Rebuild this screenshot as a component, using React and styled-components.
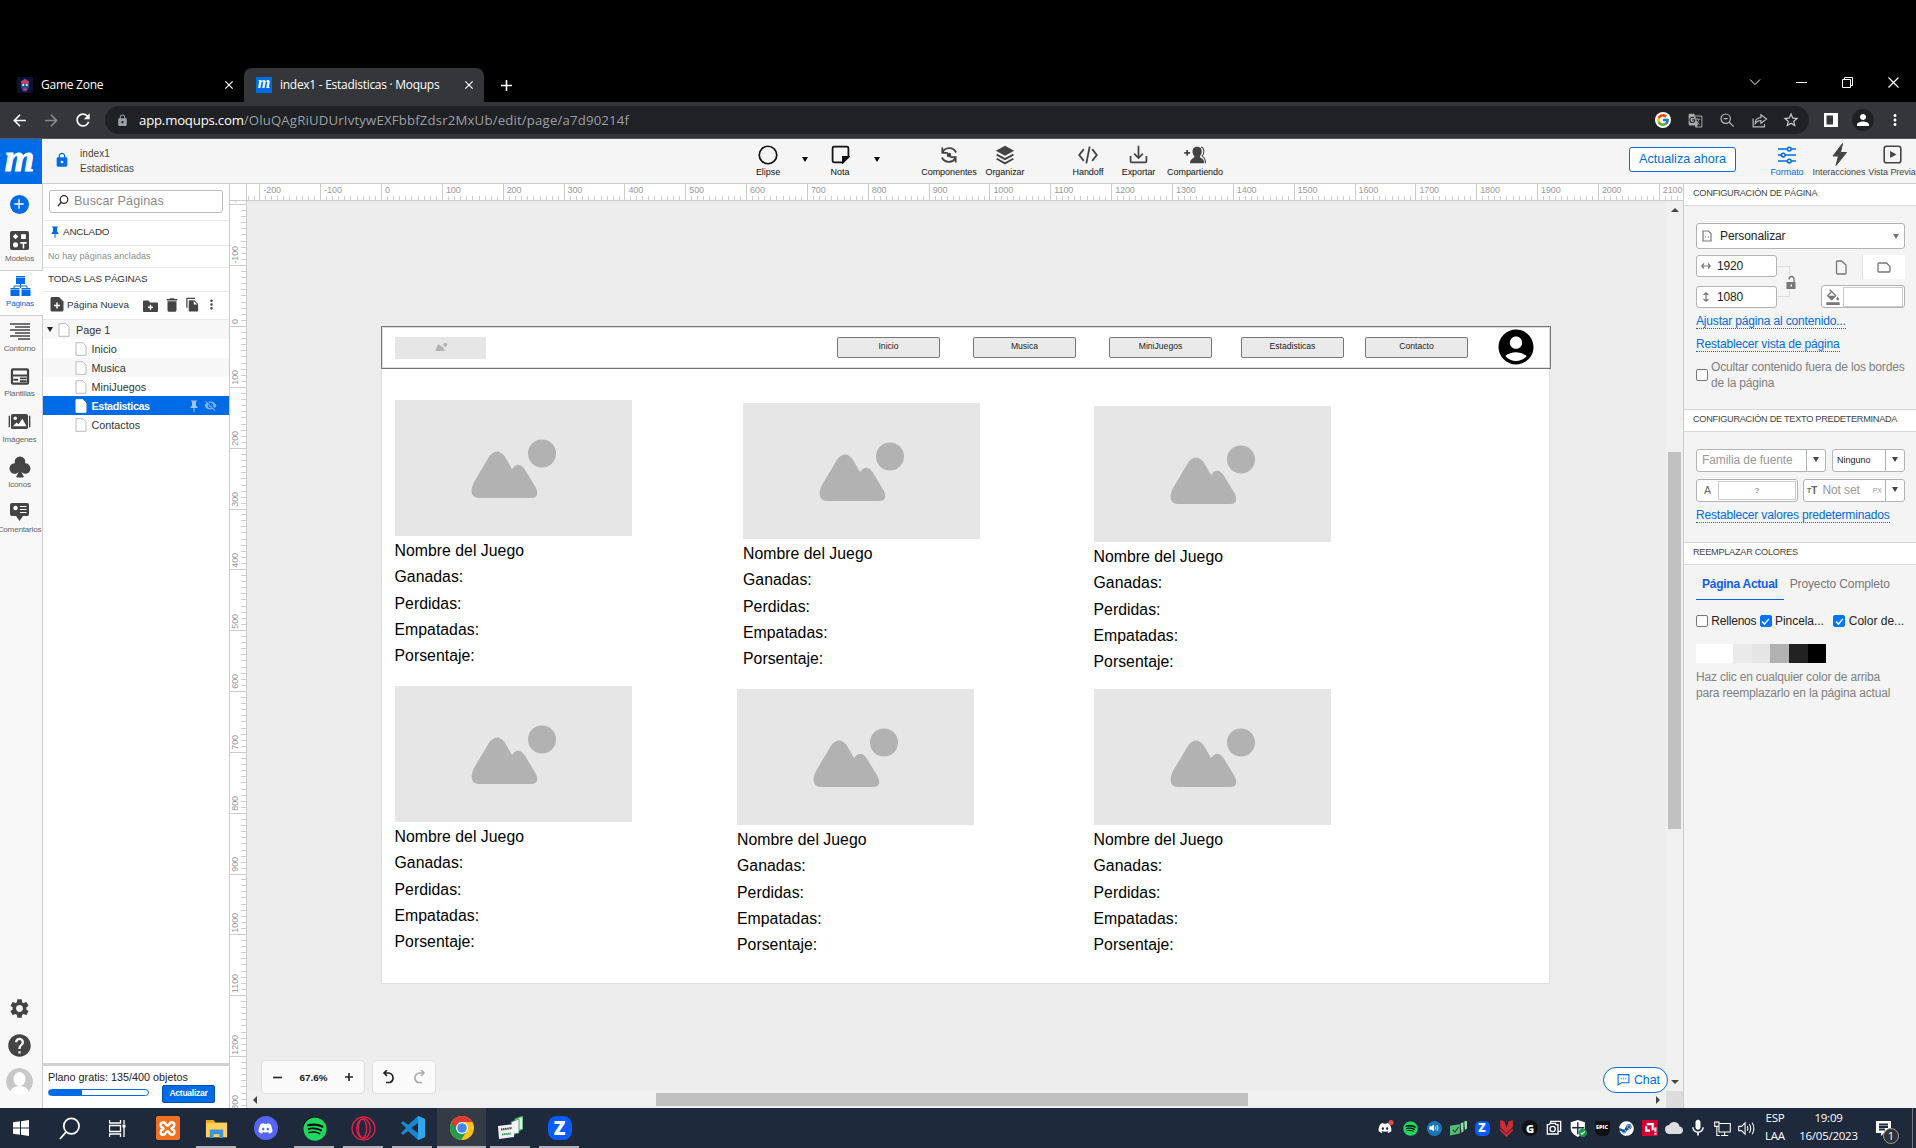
import React from 'react';
import styled, { createGlobalStyle } from 'styled-components';
import {
  MdClose, MdAdd, MdArrowBack, MdArrowForward, MdRefresh, MdLock, MdGTranslate, MdStarBorder,
  MdPerson, MdMoreVert, MdSettings, MdHelp, MdDelete, MdFileCopy,
  MdVisibilityOff, MdAccountCircle, MdFormatColorFill, MdCloud, MdMic,
} from 'react-icons/md';
import { FcGoogle } from 'react-icons/fc';
import { BsSuitClubFill } from 'react-icons/bs';
import { FaDiscord, FaSpotify, FaSteam } from 'react-icons/fa';

const Global = createGlobalStyle`
  * { box-sizing: border-box; }
  body { margin: 0; background: #000; overflow: hidden; }
  svg { display: block; flex: none; }
`;
const BLUE = '#006be6';
const INK = '#444';
const STEP = 60.845;

const Screen = styled.div`
  width: 1916px; height: 1148px; display: flex; flex-direction: column;
  font-family: "Liberation Sans", Arial, sans-serif; color: #333; white-space: nowrap; overflow: hidden;
`;
const Text = styled.span`
  font-size: ${p => p.$s || 10.8}px; color: ${p => p.$c || 'inherit'}; font-weight: ${p => p.$w || 400};
  letter-spacing: ${p => p.$ls || 0}px; margin-left: ${p => p.$ml || 0}px;
`;
const Spacer = styled.div`flex: ${p => (p.$w ? 'none' : 1)}; width: ${p => p.$w || 0}px; height: ${p => (p.$h ? `${p.$h}px` : 'auto')};`;

/* ---------- browser ---------- */
const TabStrip = styled.div`
  height: 102px; padding-top: 68px; display: flex; background: #000; color: #fff; flex: none;
  font-family: "Open Sans", "Noto Sans", sans-serif;
`;
const Tab = styled.div`
  width: ${p => p.$w}px; height: 34px; display: flex; align-items: center; padding: 0 8px 1px ${p => p.$pl}px; gap: 8px;
  background: ${p => (p.$active ? '#35363a' : 'transparent')}; border-radius: 8px 8px 0 0;
`;
const Favicon = styled.div`
  width: 16px; height: 16px; background: ${p => p.$bg}; color: #fff; display: grid; place-items: center; flex: none;
  font: italic bold 16px/8px "Liberation Serif", serif; padding-bottom: ${p => p.$pb || 0}px;
`;
const NewTab = styled.div`width: 44px; height: 34px; display: grid; place-items: center;`;
const WindowControls = styled.div`
  display: flex; height: 28px; align-items: center;
  & > div { width: 46px; display: grid; place-items: center; }
`;
const BrowserBar = styled.div`
  height: 37px; flex: none; background: #35363a; border-bottom: 1px solid #55585c; display: flex; align-items: center;
  padding-left: 3px; color: #fff;
`;
const BarButton = styled.div`width: 32px; display: grid; place-items: center; color: ${p => p.$c || '#fff'};`;
const Omnibox = styled.div`
  width: 1704px; height: 28px; border-radius: 14px; background: #202124; display: flex; align-items: center;
  margin-left: 6px; padding: 0 2px 0 11px; font-family: "Open Sans", sans-serif; color: #9aa0a6; margin-right: 6px;
`;
const ProfileDot = styled.div`
  width: 22px; height: 22px; border-radius: 50%; background: #202124; display: grid; place-items: center;
`;

/* ---------- app header ---------- */
const Header = styled.div`
  height: 45px; flex: none; display: flex; background: #f5f5f5; border-bottom: 1px solid #ccc; position: relative;
`;
const Logo = styled.div`
  width: 42px; height: 45px; flex: none; background: ${BLUE}; color: #fff; display: grid; place-items: center;
  font: italic bold 38px/30px "Liberation Serif", serif; padding: 0 3px 8px 0; -webkit-text-stroke: 0.8px #fff;
`;
const DocNames = styled.div`
  width: 663px; margin-left: 11px; display: flex; flex-direction: column; padding-top: 7px; line-height: 15px; font-size: 10px; color: #444; letter-spacing: 0.07px;
`;
const HeaderLock = styled.div`width: 27px; padding: 13px 0 0 12px; color: ${BLUE};`;
const Tool = styled.div`
  width: ${p => p.$w}px; margin-left: ${p => p.$ml || 0}px; display: flex; flex-direction: column; align-items: center; flex: none;
  color: ${p => p.$c || '#444'}; padding-top: 5px;
  & > div { height: 23px; margin-top: -1px; display: grid; place-items: center; }
  & > span { font-size: 9px; line-height: 13px; color: ${p => p.$tc || '#111'}; letter-spacing: -0.05px; }
`;
const ToolCaret = styled.div`
  width: ${p => p.$w}px; padding: 18px 0 0; display: flex; justify-content: center;
`;
const Triangle = styled.i`
  width: 0; height: 0; border: ${p => p.$s || 4}px solid transparent; flex: none;
  ${p => (p.$h ? `border-top-width:${p.$h}px;` : '')}
  ${p => (p.$d === 'up' ? `border-bottom-color:${p.$c || INK};border-top:0;` : '')}
  ${p => (p.$d === 'down' ? `border-top-color:${p.$c || INK};border-bottom:0;` : '')}
  ${p => (p.$d === 'left' ? `border-right-color:${p.$c || INK};border-left:0;` : '')}
  ${p => (p.$d === 'right' ? `border-left-color:${p.$c || INK};border-right:0;` : '')}
`;
const UpgradeButton = styled.div`
  width: 107px; height: 25px; margin: 8px 28px 0 0; border: 1px solid ${BLUE}; border-radius: 3px; background: #fff; color: ${BLUE};
  font-size: 12.6px; line-height: 22px; text-align: center;
`;

/* ---------- workspace ---------- */
const Workspace = styled.div`height: 924px; display: flex; flex: none;`;
const Rail = styled.div`
  width: 43px; flex: none; background: #f8f8f8; border-right: 1px solid #ccc; display: flex; flex-direction: column;
`;
const AddSlot = styled.div`height: 41px; padding: 10.500px 0 0 9.500px;`;
const AddButton = styled.div`
  width: 19px; height: 19px; border-radius: 50%; background: ${BLUE}; color: #fff; display: grid; place-items: center;
`;
const RailItem = styled.div`
  height: 45.3px; width: ${p => (p.$active ? 43 : 42)}px; padding-right: 3px; display: flex; flex-direction: column; align-items: center;
  background: ${p => (p.$active ? '#fff' : 'transparent')}; color: ${p => (p.$active ? BLUE : INK)};
  box-shadow: ${p => (p.$active ? 'inset 0 1px #ccc, inset 0 -1px #ccc' : 'none')};
  & > div { height: 24px; margin-top: ${p => (p.$active ? 3.5 : 3.5)}px; display: grid; place-items: center; }
  & > span { font-size: 8.1px; line-height: 11px; letter-spacing: -0.2px; color: ${p => (p.$active ? BLUE : '#666')}; }
`;
const RailFoot = styled.div`height: 36.5px; width: 39px; display: grid; place-items: center; color: ${INK};`;
const Avatar = styled.div`width: 27px; height: 27px; border-radius: 50%; overflow: hidden;`;

const Pages = styled.div`width: 186px; flex: none; background: #fff; display: flex; flex-direction: column;`;
const SearchWrap = styled.div`height: 37px; border-bottom: 1px solid #e6e6e6; padding: 6px 6px 0;`;
const SearchBox = styled.div`
  height: 23px; border: 1px solid #bbb; border-radius: 3px; display: flex; align-items: center; padding: 0 0 1px 7px; gap: 5px; color: #8a8a8a;
`;
const Line = styled.div`
  height: ${p => p.$h}px; border-bottom: 1px solid #e6e6e6; display: flex; align-items: center; padding: 0 0 ${p => p.$pb || 2}px ${p => p.$pl || 5}px; flex: none;
`;
const PageRow = styled.div`
  height: 19px; flex: none; display: flex; align-items: center; padding: 0 12px 0 ${p => (p.$root ? 4 : 32)}px; gap: ${p => (p.$root ? 5 : 4.5)}px;
  background: ${p => (p.$active ? BLUE : p.$alt ? '#f7f7f7' : '#fff')}; color: ${p => (p.$active ? '#fff' : '#333')};
  font-size: 10.8px; font-weight: ${p => (p.$active ? 700 : 400)}; letter-spacing: ${p => (p.$active ? -0.4 : 0)}px;
`;
const Plan = styled.div`
  height: 45px; border-top: 3px solid #d0d0d0; padding: 4px 0 0 5px; color: #222; font-size: 10.8px; line-height: 14px;
`;
const PlanRow = styled.div`display: flex; align-items: flex-start;`;
const Progress = styled.div`
  width: 101px; height: 7px; margin-top: 5px; border: 1px solid ${BLUE}; border-radius: 4px; background: linear-gradient(90deg, ${BLUE} 33%, #fff 33%);
`;
const SmallButton = styled.div`
  width: 53px; height: 18px; margin: 1px 0 0 13px; background: ${BLUE}; border: 1px solid #004fae; border-radius: 2px; color: #fff; font-size: 8.6px;
  font-weight: 700; line-height: 15px; text-align: center; letter-spacing: -0.3px;
`;

const VRulerColumn = styled.div`width: 18px; flex: none; background: #fff; border: 1px solid #ccc; border-width: 0 1px; display: flex; flex-direction: column;`;
const RulerCorner = styled.div`height: 17px; border-bottom: 1px solid #ccc; flex: none;`;
const VRuler = styled.div`flex: 1; overflow: hidden; min-height: 0;`;
const VCell = styled.div`
  height: ${STEP}px; margin-top: ${p => p.$first || 0}px; border-bottom: 1px solid #ccc; display: flex; align-items: flex-end; padding-bottom: 2px;
  background: repeating-linear-gradient(0deg, transparent 0 5.08px, #ccc 5.08px 6.0845px) right bottom / 5px 100% no-repeat;
  & > span { writing-mode: vertical-rl; transform: rotate(180deg); font-size: 9px; line-height: 11px; color: #999; letter-spacing: -0.1px; }
`;
const Center = styled.div`width: 1436px; flex: none; display: flex; flex-direction: column;`;
const HRuler = styled.div`height: 17px; flex: none; background: #fff; border-bottom: 1px solid #ccc; display: flex; overflow: hidden;`;
const HCell = styled.div`
  width: ${STEP}px; flex: none; margin-left: ${p => p.$first || 0}px; border-left: 1px solid #ccc; padding-left: 3px; font-size: 9px; line-height: 12px; color: #999; letter-spacing: -0.1px;
  background: repeating-linear-gradient(90deg, transparent 0 5.08px, #ccc 5.08px 6.0845px) left bottom / 100% 4px no-repeat;
`;
const CanvasGrid = styled.div`flex: 1; display: grid; grid-template: 1fr 17px / 1fr 17px; position: relative;`;
const Canvas = styled.div`background: #ededed; position: relative; overflow: hidden;`;
const VScroll = styled.div`background: #f0f0f0; display: flex; flex-direction: column; align-items: center; padding: 7px 0;`;
const VThumb = styled.div`width: 13px; height: 377px; background: #c1c1c1; margin-top: 240px;`;
const HScroll = styled.div`background: #f0f0f0; display: flex; align-items: center; padding: 0 6px;`;
const HThumb = styled.div`width: 592px; height: 13px; background: #c1c1c1; margin-left: 399px;`;
const ScrollCorner = styled.div`background: #dcdcdc;`;

const Artboard = styled.div`
  position: absolute; left: 134px; top: 125px; width: 1169px; height: 658px; background: #fff; border: 1px solid #ddd;
`;
const MockNav = styled.div`
  position: absolute; left: -1px; top: -1px; width: 1170px; height: 43px; border: 1px solid #777; box-shadow: inset 0 0 0 1px #ddd;
`;
const Placed = styled.div`position: absolute; left: ${p => p.$x}px; top: ${p => p.$y}px;`;
const MockButton = styled(Placed)`
  width: 103px; height: 21px; border: 1px solid #777; border-radius: 2px; background: #eaeaea; color: #222; font-size: 8.6px; line-height: 17px; text-align: center;
`;
const GameCard = styled(Placed)`
  width: 237px; color: #000; font-size: 15.8px; line-height: 26.4px; display: flex; flex-direction: column; letter-spacing: 0.03px;
`;
const FloatBox = styled.div`
  height: 34px; background: #fafafa; border: 1px solid #ddd; border-radius: 4px; display: flex; align-items: center; justify-content: space-between; padding: 0 ${p => p.$p}px; width: ${p => p.$w}px; color: #222;
`;
const FloatBar = styled.div`position: absolute; left: 14px; top: 859px; display: flex; gap: 7px;`;
const Chat = styled.div`
  position: absolute; left: 1356px; top: 866px; width: 65px; height: 26px; border: 1px solid ${BLUE}; border-radius: 13px; background: #fff; color: ${BLUE};
  display: flex; align-items: center; padding: 0 0 1px 13px; gap: 4px; font-size: 12.4px; letter-spacing: -0.1px;
`;

/* ---------- format panel ---------- */
const Format = styled.div`width: 233px; flex: none; border-left: 1px solid #ccc; background: #f4f4f4; display: flex; flex-direction: column; color: #222;`;
const SectionHead = styled.div`
  height: ${p => p.$h || 22}px; flex: none; background: #fff; border: 1px solid #d8d8d8; border-width: ${p => (p.$first ? 0 : 1)}px 0 1px; padding: 0 0 3px 9px; display: flex; align-items: center;
  font-size: 9.2px; letter-spacing: -0.28px; color: #444;
`;
const SectionBody = styled.div`height: ${p => p.$h}px; padding: ${p => p.$pt}px 11px 0 12px; display: flex; flex-direction: column; align-items: flex-start;`;
const Row = styled.div`display: flex; align-items: ${p => p.$a || 'center'}; margin-top: ${p => p.$mt || 0}px; width: 209px; gap: ${p => p.$g || 0}px;`;
const Field = styled.div`
  width: ${p => p.$w}px; height: ${p => p.$h || 23}px; background: #fff; border: 1px solid #b3b3b3; border-radius: 3px; display: flex; align-items: center;
  padding: 0 ${p => p.$pr || 0}px 0 ${p => p.$pl || 0}px; color: ${p => p.$c || '#222'}; font-size: ${p => p.$s || 12}px; flex: none;
`;
const DropCell = styled.div`width: 19px; align-self: stretch; border-left: 1px solid #b3b3b3; display: flex; justify-content: center; padding-top: 7px;`;
const SizeStack = styled.div`display: flex; flex-direction: column; gap: 9px;`;
const LinkLines = styled.div`width: 31px; height: 52px; flex: none; color: #777;`;
const Orientation = styled.div`display: flex; margin-left: 24px; & > div { width: 43px; height: 24px; display: grid; place-items: center; }`;
const ActiveSide = styled.div`background: #fff; border-left: 1px solid #ddd;`;
const SideControls = styled.div`display: flex; flex-direction: column; gap: 6px; width: 97px; align-items: flex-end;`;
const Swatch = styled.div`
  width: ${p => p.$w}px; height: ${p => p.$h}px; background: #fff; border: 1px solid #ccc; text-align: center; font-size: 8px; font-weight: 700; line-height: 17px; color: #999;
`;
const PanelLink = styled.div`
  color: ${BLUE}; font-size: 12px; line-height: 13px; border-bottom: 1px dotted ${BLUE}; margin-top: ${p => p.$mt}px; letter-spacing: -0.17px;
`;
const Box = styled.div`
  width: 12px; height: 12px; border: 1px solid ${p => (p.$on ? '#0075ff' : '#767676')}; border-radius: 2px; background: ${p => (p.$on ? '#0075ff' : '#fff')}; flex: none; display: grid; place-items: center;
`;
const Wrap = styled.div`font-size: 12px; line-height: 16px; color: #808080; letter-spacing: -0.18px; margin-top: ${p => p.$mt || 0}px;`;
const TabLabel = styled.div`
  height: 31px; padding: 8px 6px 0; font-size: 12px; font-weight: ${p => (p.$active ? 700 : 400)}; color: ${p => (p.$active ? '#0f5cf0' : '#777')};
  border-bottom: 1px solid ${p => (p.$active ? '#0f5cf0' : 'transparent')}; letter-spacing: ${p => (p.$active ? -0.25 : -0.12)}px;
`;
const ColorStrip = styled.div`display: flex; margin-top: 16px; height: 19px;`;
const Color = styled.div`width: ${p => p.$w}px; background: ${p => p.$c};`;

/* ---------- taskbar ---------- */
const Taskbar = styled.div`
  height: 40px; flex: none; background: #1e2a3c; display: flex; color: #fff; font-family: "Open Sans", sans-serif; overflow: hidden;
`;
const Slot = styled.div`
  width: ${p => p.$w || 49}px; display: grid; place-items: center; position: relative; flex: none;
  background: ${p => (p.$active ? '#343b44' : 'transparent')};
  &::after { content: ''; position: absolute; bottom: 0; left: ${p => (p.$active ? 0 : 4)}px; right: ${p => (p.$active ? 0 : 5)}px; height: 2px; background: ${p => (p.$open || p.$active ? '#b4b3b6' : 'transparent')}; }
`;
const TraySlot = styled.div`width: 24px; display: grid; place-items: center;`;
const TwoLines = styled.div`width: ${p => p.$w}px; font-size: 11.5px; line-height: 17.5px; text-align: center; padding-top: 1px; letter-spacing: -0.25px;`;
const Notice = styled.div`width: 47px; display: flex; align-items: center; padding-left: 11px; position: relative;`;
const Badge = styled.div`
  position: absolute; left: 18px; top: 20px; width: 16px; height: 16px; border-radius: 50%; background: #333; border: 1px solid #999; font-size: 11px; line-height: 14px; text-align: center;
`;
const ShowDesktop = styled.div`width: 4px; border-left: 1px solid #777;`;
const Disc = styled.div`
  width: ${p => p.$s}px; height: ${p => p.$s}px; border-radius: ${p => p.$r || '50%'}; background: ${p => p.$bg}; color: ${p => p.$c || '#fff'}; display: grid; place-items: center;
  font: 800 ${p => p.$f || 12}px/1 "Open Sans", sans-serif;
`;
const ImageBlock = styled.div`
  width: ${p => p.$w}px; height: ${p => p.$h}px; background: #e6e6e6; display: grid; place-items: center; overflow: hidden; flex: none; margin-bottom: 1.8px;
`;

const Ico = ({ s = 20, h, vb = '0 0 24 24', children, w = 2, fill = 'none' }) => (
  <svg width={s} height={h || s} viewBox={vb} fill={fill} stroke={fill === 'none' ? 'currentColor' : 'none'} strokeWidth={w}>{children}</svg>
);
const PageIcon = ({ on }) => (
  <svg width="12" height="14" viewBox="0 0 12 14"><path d="M1 .7h7L11 4v9.3H1z" fill="#fff" stroke={on ? '#fff' : '#bbb'} /></svg>
);
const Scene = ({ w, h, vb = '0 0 237 136' }) => (
  <svg width={w} height={h} viewBox={vb} preserveAspectRatio="xMidYMid meet">
    <path fill="#b2b2b2" d="M84 98Q76.500 98 76.500 90Q77 86 79 82L94.500 56Q102 47 109.500 56L117 69Q123 60.500 129.500 69L141 88Q145 98 136 98Z" />
    <circle cx="147" cy="53.500" r="14" fill="#b2b2b2" />
  </svg>
);
const Zoomer = ({ s, f }) => <Disc $s={s} $bg="#0b5cff" $r="36%" $f={f}>Z</Disc>;
const DeskStack = () => (
  <Ico s={25} h={24} vb="0 0 25 24" fill="#fff">
    <path d="M17 3l8-3v13l-5 2z" fill="#dff0e4" stroke="#2f9a55" strokeWidth="1.200" />
    <path d="M13 6l8-3v14l-5 1z" fill="#f2f7f3" stroke="#2f9a55" strokeWidth=".8" />
    <path d="M0 10l17-2-1 13-15 2z" fill="#f1f1f1" />
    <path d="M3 13.500l11-1.500" stroke="#444" strokeWidth="2" strokeDasharray="1.500 .6" /><path d="M4 18.500l9-1" stroke="#2f9a55" strokeWidth="2" strokeDasharray="1.500 .6" />
  </Ico>
);

const tree = [['Inicio'], ['Musica', 1], ['MiniJuegos'], ['Estadisticas', 0, 1], ['Contactos']];
const cards = [[12.5, 73], [361, 76], [711.5, 79], [12.5, 359], [355, 362], [711.5, 362]];
const navs = [['Inicio', 455], ['Musica', 591], ['MiniJuegos', 727], ['Estadisticas', 859], ['Contacto', 983]];
const hMarks = Array.from({ length: 25 }, (_, i) => (i - 3) * 100);
const vMarks = Array.from({ length: 16 }, (_, i) => (i - 2) * 100);

export default function App() {
  return (
    <Screen>
      <Global />
      <TabStrip>
        <Tab $w={244} $pl={17}>
          <Favicon $bg="#0d1030">
            <Ico s={14} fill="#c44a70"><path d="M12 1l7 5v9l-4 8H9l-4-8V6z" fill="#35488e" /><path d="M5 6l7-4 7 4-2 4H7z" fill="#c83c60" /><circle cx="9" cy="12" r="2" fill="#8fd" /><circle cx="15" cy="12" r="2" fill="#8fd" /><path d="M9 18h6v3H9z" /></Ico>
          </Favicon>
          <Text $s={12} $ls={-0.25}>Game Zone</Text><Spacer /><MdClose size={14} />
        </Tab>
        <Tab $w={240} $pl={12} $active>
          <Favicon $bg={BLUE} $pb={3}>m</Favicon>
          <Text $s={12} $ls={-0.28}>index1 - Estadisticas · Moqups</Text><Spacer /><MdClose size={14} />
        </Tab>
        <NewTab><MdAdd size={19} /></NewTab>
        <Spacer />
        <WindowControls>
          <div><Ico s={12} vb="0 0 12 12" w={1}><path d="M1 3.500l5 5 5-5" /></Ico></div>
          <div><Ico s={11} vb="0 0 11 11" w={1}><path d="M0 5.500h11" /></Ico></div>
          <div><Ico s={11} vb="0 0 11 11" w={1}><path d="M.5 2.500h8v8h-8zM2.500 2.500v-2h8v8h-2" /></Ico></div>
          <div><Ico s={11} vb="0 0 11 11" w={1.2}><path d="M.5.5l10 10M10.500.5l-10 10" /></Ico></div>
        </WindowControls>
      </TabStrip>
      <BrowserBar>
        <BarButton><MdArrowBack size={19} /></BarButton>
        <BarButton $c="#8a8b8e"><MdArrowForward size={19} /></BarButton>
        <BarButton><MdRefresh size={20} /></BarButton>
        <Omnibox>
          <MdLock size={13} />
          <Text $s={13.2} $c="#fff" $ml={10} $ls={-0.2}>app.moqups.com</Text><Text $s={13.2} $ls={0.17}>/OluQAgRiUDUrIvtywEXFbbfZdsr2MxUb/edit/page/a7d90214f</Text>
          <Spacer />
          <BarButton><Disc $s={16} $bg="#fff"><FcGoogle size={14} /></Disc></BarButton>
          <BarButton $c="#aaa"><MdGTranslate size={15} /></BarButton>
          <BarButton $c="#bbb"><Ico s={16} w={1.8}><circle cx="10" cy="10" r="7" /><path d="M15 15l7 7M7 10h6" /></Ico></BarButton>
          <BarButton $c="#bbb"><Ico s={17} w={1.7}><path d="M3 9v12h16v-4M14 4l8 6-8 6v-4c-4 0-6 1-8 4 0-5 3-8 8-8z" /></Ico></BarButton>
          <BarButton $c="#ccc"><MdStarBorder size={18} /></BarButton>
        </Omnibox>
        <BarButton><Ico s={14} vb="0 0 14 14" fill="#fff"><path fillRule="evenodd" d="M0 0h14v14H0zM2.500 2.500v9H9v-9z" /></Ico></BarButton>
        <BarButton><ProfileDot><MdPerson size={18} /></ProfileDot></BarButton>
        <BarButton><MdMoreVert size={18} /></BarButton>
      </BrowserBar>

      <Header>
        <Logo>m</Logo>
        <HeaderLock><MdLock size={16} /></HeaderLock>
        <DocNames><span>index1</span><span>Estadisticas</span></DocNames>
        <Tool $w={50} $c="#111"><div><Ico s={20} w={2}><circle cx="12" cy="12" r="10.500" /></Ico></div><span>Elipse</span></Tool>
        <ToolCaret $w={23}><Triangle $d="down" $c="#000" $s={3.5} $h={5} /></ToolCaret>
        <Tool $w={48} $c="#111"><div><Ico s={19} w={2.2}><path d="M2 4q0-2 2-2h16q2 0 2 2v11l-7 7H4q-2 0-2-2z" /><path d="M22 15h-7v7z" fill="currentColor" /></Ico></div><span>Nota</span></Tool>
        <ToolCaret $w={26}><Triangle $d="down" $c="#000" $s={3.5} $h={5} /></ToolCaret>
        <Tool $w={62} $ml={28}><div><Ico s={20} w={2.2}><path d="M4 9.500A9 9 0 0 1 20.500 9M4 3v6.500h6.500M20 14.500A9 9 0 0 1 3.500 15M20 21v-6.500h-6.500" /><circle cx="12" cy="12" r="2.800" fill="currentColor" stroke="none" /></Ico></div><span>Componentes</span></Tool>
        <Tool $w={50}><div><Ico s={20} w={2.2}><path d="M12 1l11 6-11 6L1 7z" fill="currentColor" stroke="none" /><path d="M2 11.500l10 5.500 10-5.500M2 16.500L12 22l10-5.500" /></Ico></div><span>Organizar</span></Tool>
        <Tool $w={42} $ml={37}><div><Ico s={20} w={2.2}><path d="M7 5l-5.500 7L7 19M17 5l5.500 7L17 19M14 2l-4 20" /></Ico></div><span>Handoff</span></Tool>
        <Tool $w={59}><div><Ico s={19} w={2.2}><path d="M12 1v15M6.500 11l5.500 5.500 5.500-5.500M2 14v6.500q0 1.500 1.500 1.500h17q1.500 0 1.500-1.500V14" /></Ico></div><span>Exportar</span></Tool>
        <Tool $w={54}><div><Ico s={23} vb="0 0 27 24" h={20} w={2}><path d="M0 9.500h7M3.500 6v7" /><path d="M15.500 2c4.500 0 5.500 3 5.500 6s-1.500 4-2 5v2c1.500 1 5 1.500 5 7H7c0-5.500 4-6 5-7v-2c-1-1-2-2-2-5s1-6 5.500-6z" fill="currentColor" stroke="none" /><path d="M20 2.500c2.500.5 3.500 3 3.500 5.500 0 2-1 4-2 5 3 2 4 4 4 9" strokeWidth="1.300" /></Ico></div><span>Compartiendo</span></Tool>
        <Spacer />
        <UpgradeButton>Actualiza ahora</UpgradeButton>
        <Tool $w={46} $c={BLUE} $tc={BLUE}><div><Ico s={18} w={2}><path d="M0 4h12M18 4h6M0 12h4M10 12h14M0 20h12M18 20h6" /><circle cx="15" cy="4" r="2.500" /><circle cx="7" cy="12" r="2.500" /><circle cx="15" cy="20" r="2.500" /></Ico></div><span>Formato</span></Tool>
        <Tool $w={58} $tc="#444"><div><Ico s={17} h={23} vb="0 0 17 22" fill="#444"><path d="M11.500 0L2 12.500h5.500L5 22 15.500 9H9.500z" stroke="#444" strokeWidth="1" /></Ico></div><span>Interacciones</span></Tool>
        <Tool $w={48} $tc="#444"><div><Ico s={19} w={2}><rect x="1.500" y="1.500" width="21" height="21" rx="3" /><path d="M9 7.500l8 4.500-8 4.500z" fill="currentColor" stroke="none" /></Ico></div><span>Vista Previa</span></Tool>
      </Header>

      <Workspace>
        <Rail>
          <AddSlot><AddButton><MdAdd size={16} /></AddButton></AddSlot>
          <RailItem><div><Ico s={19} fill="#444"><rect width="24" height="24" rx="2.500" /><path d="M7 3.500l3.500 3.500L7 10.500 3.500 7zM14 4h6v6h-6zM13 14h8v2h-3v6h-2v-6h-3z" fill="#fff" /><circle cx="7" cy="17.500" r="3.200" fill="#fff" /></Ico></div><span>Modelos</span></RailItem>
          <RailItem $active><div><Ico s={21} h={22} vb="0 0 21 22" w={1}><path d="M10.500 8v5M4 14v-3h13v3" /><path fill="currentColor" stroke="none" d="M6 1h9v1.500H6zM6 3h9v6H6zM.5 13h9v1.500h-9zM.5 15h9v6H.5zM11.500 13h9v1.500h-9zM11.500 15h9v6h-9z" /></Ico></div><span>Páginas</span></RailItem>
          <RailItem><div><Ico s={20} h={17} vb="0 0 20 17" w={1.6}><path d="M0 1h20M5 4h15M0 7h20M5 10h15M0 13h20M8 16h12" /></Ico></div><span>Contorno</span></RailItem>
          <RailItem><div><Ico s={20} h={17} vb="0 0 20 18" w={2.4}><rect x="1.500" y="1.500" width="17" height="15" rx="1" /><path d="M1 8h18M3 12.500h5M10 11h7M10 14h7" strokeWidth="2" /></Ico></div><span>Plantillas</span></RailItem>
          <RailItem><div><Ico s={23} h={17} vb="0 0 23 18" fill="#444"><rect x="2.500" y="1" width="18" height="16" rx="2" /><path d="M0 3h1.500v12H0zM21.500 3H23v12h-1.500z" /><circle cx="7" cy="5.500" r="1.800" fill="#fff" /><path d="M4.500 14l4-4 2 2 4-6 4.500 8z" fill="#fff" /></Ico></div><span>Imágenes</span></RailItem>
          <RailItem><div><BsSuitClubFill size={24} /></div><span>Iconos</span></RailItem>
          <RailItem><div><Ico s={19} h={18} vb="0 0 19 18" fill="#444"><path d="M2 0h15q2 0 2 2v9q0 2-2 2h-4l-3.500 5L6 13H2q-2 0-2-2V2q0-2 2-2z" /><circle cx="5.500" cy="5" r="2.200" fill="#fff" /><path d="M10 3.500h6.500M10 6.500h6.500M10 9.500h6.500" stroke="#fff" strokeWidth="1.200" /></Ico></div><span>Comentarios</span></RailItem>
          <Spacer />
          <RailFoot><MdSettings size={23} /></RailFoot>
          <RailFoot><MdHelp size={27} /></RailFoot>
          <RailFoot><Avatar><Ico s={27} vb="0 0 27 27" fill="#c8c8c8"><circle cx="13.500" cy="13.500" r="13.500" /><ellipse cx="13.500" cy="11" rx="6" ry="7" fill="#fff" /><ellipse cx="13.500" cy="24" rx="9" ry="6" fill="#fff" /></Ico></Avatar></RailFoot>
          <Spacer $w={1} $h={8} />
        </Rail>

        <Pages>
          <SearchWrap><SearchBox><Ico s={12} vb="0 0 12 12" w={1.3}><g stroke="#333"><circle cx="7" cy="4.500" r="3.800" /><path d="M4.500 7L1 11" /></g></Ico><Text $s={12.6} $ls={0.12}>Buscar Páginas</Text></SearchBox></SearchWrap>
          <Line $h={25} $pl={6} $pb={3}><Ico s={12} fill={BLUE}><path d="M6 1h12v2h-2v8l3 3v2h-6v7l-1 1-1-1v-7H5v-2l3-3V3H6z" /></Ico><Text $s={9.9} $ml={2} $ls={-0.2}>ANCLADO</Text></Line>
          <Line $h={22}><Text $s={9} $c="#8c8c8c" $ls={0.07}>No hay páginas ancladas</Text></Line>
          <Line $h={24}><Text $s={9.9} $ls={-0.15}>TODAS LAS PÁGINAS</Text></Line>
          <Line $h={28} $pl={7}>
            <Ico s={14} h={15} vb="0 0 14 15" fill="#444"><path d="M2 0h7l4.500 4.500V13q0 1.500-1.500 1.500H2Q.5 14.500.5 13V1.500Q.5 0 2 0z" /><path d="M7 5.500v6M4 8.500h6" stroke="#fff" strokeWidth="1.500" /></Ico>
            <Text $s={9.9} $ml={3} $ls={0}>Página Nueva</Text><Spacer $w={14} />
            <Ico s={15} h={15} vb="0 -3 15 15" fill="#444"><path d="M0 1.500Q0 .5 1 .5h4.500L7 2.500h7q1 0 1 1V11q0 1-1 1H1q-1 0-1-1z" /><path d="M7.500 4.800v5M5 7.300h5" stroke="#fff" strokeWidth="1.400" /></Ico>
            <Spacer $w={5} /><MdDelete size={18} color="#444" /><Spacer $w={4} /><MdFileCopy size={15} color="#444" /><Spacer $w={4} /><MdMoreVert size={15} color="#444" />
          </Line>
          <PageRow $root $alt><Triangle $d="down" $s={3} $h={5} $c="#222" /><PageIcon /><Text $ml={1}>Page 1</Text></PageRow>
          {tree.map(([n, alt, on]) => (
            <PageRow key={n} $alt={alt} $active={on}><PageIcon on={on} /><span>{n}</span>
              {on ? <><Spacer /><Ico s={12} fill="#9cc4f5"><path d="M6 1h12v2h-2v8l3 3v2h-6v7l-1 1-1-1v-7H5v-2l3-3V3H6z" /></Ico><MdVisibilityOff size={13} color="#7fb3f2" /></> : null}
            </PageRow>
          ))}
          <Spacer />
          <Plan>Plano gratis: 135/400 objetos<PlanRow><Progress /><SmallButton>Actualizar</SmallButton></PlanRow></Plan>
        </Pages>

        <VRulerColumn>
          <RulerCorner />
          <VRuler>{vMarks.map((m, i) => <VCell key={m} $first={i === 0 ? -56.5 : 0}><span>{m}</span></VCell>)}</VRuler>
        </VRulerColumn>

        <Center>
          <HRuler>{hMarks.map((m, i) => <HCell key={m} $first={i === 0 ? -48.5 : 0}>{m}</HCell>)}</HRuler>
          <CanvasGrid>
            <Canvas>
              <Artboard>
                <MockNav />
                <Placed $x={12.5} $y={9.5}><ImageBlock $w={91} $h={22}><Scene w={91} h={22} vb="5 -3 215 160" /></ImageBlock></Placed>
                {navs.map(([n, x]) => <MockButton key={n} $x={x} $y={10}>{n}</MockButton>)}
                <Placed $x={1113} $y={-1}><MdAccountCircle size={42} color="#000" /></Placed>
                {cards.map(([x, y]) => (
                  <GameCard key={`${x}-${y}`} $x={x} $y={y}>
                    <ImageBlock $w={237} $h={136}><Scene w={237} h={136} /></ImageBlock>
                    <span>Nombre del Juego</span><span>Ganadas:</span><span>Perdidas:</span><span>Empatadas:</span><span>Porsentaje:</span>
                  </GameCard>
                ))}
              </Artboard>
            </Canvas>
            <VScroll><Triangle $d="up" $s={4} /><VThumb /><Spacer /><Triangle $d="down" $s={4} /></VScroll>
            <HScroll><Triangle $d="left" $s={4} /><HThumb /><Spacer /><Triangle $d="right" $s={4} /></HScroll>
            <ScrollCorner />
            <FloatBar>
              <FloatBox $w={104} $p={11}><Ico s={9} vb="0 0 9 9" w={1.6}><path d="M0 4.500h9" /></Ico><Text $s={9.9} $w={700} $ls={0}>67.6%</Text><Ico s={8} vb="0 0 8 8" w={1.6}><path d="M0 4h8M4 0v8" /></Ico></FloatBox>
              <FloatBox $w={64} $p={9}>
                <Ico s={14} vb="0 0 14 14" w={1.6}><path d="M5 0L2 3l3 3M2 3h5a5 5 0 0 1 1 9.500H4" /></Ico>
                <Ico s={14} vb="0 0 14 14" w={1.6}><path stroke="#aaa" d="M9 0l3 3-3 3M12 3H7a5 5 0 0 0-1 9.500h4" /></Ico>
              </FloatBox>
            </FloatBar>
            <Chat><Ico s={13} w={2}><path d="M2 3h20v15H8l-6 4z" /><path d="M7 10.500h2M11 10.500h2M15 10.500h2" /></Ico>Chat</Chat>
          </CanvasGrid>
        </Center>

        <Format>
          <SectionHead $first>CONFIGURACIÓN DE PÁGINA</SectionHead>
          <SectionBody $h={203} $pt={17}>
            <Field $w={209} $h={26} $pl={5} $pr={5}>
              <Ico s={10} h={12} vb="0 0 10 12" w={1.2}><path stroke="#777" d="M1 1h5.500L9 3.500V11H1zM3 7h1M6 7h1" /></Ico><Text $s={12} $ml={8} $ls={-0.1}>Personalizar</Text><Spacer /><Triangle $d="down" $s={3} $h={5} $c="#777" />
            </Field>
            <Row $mt={6} $a="flex-start">
              <SizeStack>
                <Field $w={81} $h={22} $pl={4}><Ico s={10} vb="0 0 10 10" w={1.2}><path stroke="#777" d="M1 5h8M3 2.500L.8 5 3 7.500M7 2.500L9.200 5 7 7.500" /></Ico><Text $s={12} $ml={6} $ls={-0.15}>1920</Text></Field>
                <Field $w={81} $h={22} $pl={4}><Ico s={10} vb="0 0 10 10" w={1.2}><path stroke="#777" d="M5 1v8M2.500 3L5 .8 7.500 3M2.500 7L5 9.200 7.500 7" /></Ico><Text $s={12} $ml={6} $ls={-0.15}>1080</Text></Field>
              </SizeStack>
              <LinkLines><svg width="24" height="52" viewBox="0 0 24 52"><path d="M0 11.500h12.500v8M0 41.500h12.500v-6" fill="none" stroke="#ddd" /><rect x="9.500" y="27" width="9" height="7" fill="#777" /><path d="M12 24.500q0-3 2.500-3t2.500 3V27" fill="none" stroke="#777" strokeWidth="1.300" /><rect x="13.500" y="29.500" width="1.500" height="2" fill="#fff" /></svg></LinkLines>
              <SideControls>
                <Orientation>
                  <div><Ico s={12} h={15} vb="0 0 12 15" w={1.3}><path stroke="#777" d="M1.500 2q0-1 1-1h4L11 5v8q0 1-1 1H2.500q-1 0-1-1z" /></Ico></div>
                  <ActiveSide><Ico s={14} h={11} vb="0 0 14 11" w={1.3}><path stroke="#777" d="M1 2q0-1 1-1h7.500L13 4.500V9q0 1-1 1H2q-1 0-1-1z" /></Ico></ActiveSide>
                </Orientation>
                <Field $w={84} $pl={3} $pr={1}><MdFormatColorFill size={16} color="#777" /><Spacer /><Swatch $w={60} $h={20} /></Field>
              </SideControls>
            </Row>
            <PanelLink $mt={7}>Ajustar página al contenido...</PanelLink>
            <PanelLink $mt={8.5}>Restablecer vista de página</PanelLink>
            <Row $mt={7} $g={3}><Box /><Wrap>Ocultar contenido fuera de los bordes<br />de la página</Wrap></Row>
          </SectionBody>
          <SectionHead $h={23}>CONFIGURACIÓN DE TEXTO PREDETERMINADA</SectionHead>
          <SectionBody $h={110} $pt={16.5}>
            <Row $g={6}>
              <Field $w={130} $pl={5} $c="#999"><Text $s={12} $ls={-0.08}>Familia de fuente</Text><Spacer /><DropCell><Triangle $d="down" $s={3.5} $h={5} /></DropCell></Field>
              <Field $w={73} $pl={4} $s={9}>Ninguno<Spacer /><DropCell><Triangle $d="down" $s={3.5} $h={5} /></DropCell></Field>
            </Row>
            <Row $mt={7} $g={5}>
              <Field $w={102} $pl={7} $pr={1} $s={10.5} $c="#666">A<Spacer /><Swatch $w={78} $h={19}>?</Swatch></Field>
              <Field $w={102} $pl={3} $c="#999"><Text $s={7} $w={700} $c="#666">T</Text><Text $s={10} $w={700} $c="#666">T</Text><Text $s={12} $ml={5} $ls={-0.1}>Not set</Text><Spacer /><Text $s={7}>PX</Text><Spacer $w={3} /><DropCell><Triangle $d="down" $s={3.5} $h={5} /></DropCell></Field>
            </Row>
            <PanelLink $mt={7.5}>Restablecer valores predeterminados</PanelLink>
          </SectionBody>
          <SectionHead $h={23}>REEMPLAZAR COLORES</SectionHead>
          <SectionBody $h={200} $pt={4}>
            <Row><TabLabel $active>Página Actual</TabLabel><TabLabel>Proyecto Completo</TabLabel></Row>
            <Row $mt={14} $g={3.3}><Box /><Text $s={12} $ls={-0.2}>Rellenos</Text><Box $on><Ico s={9} w={4}><path stroke="#fff" d="M3 12l6 7L21 5" /></Ico></Box><Text $s={12} $ls={-0.05}>Pincela...</Text><Spacer $w={3} /><Box $on><Ico s={9} w={4}><path stroke="#fff" d="M3 12l6 7L21 5" /></Ico></Box><Text $s={12}>Color de...</Text></Row>
            <ColorStrip><Color $w={37} $c="#fff" /><Color $w={19} $c="#eaeaea" /><Color $w={18} $c="#e5e5e5" /><Color $w={19} $c="#b2b2b2" /><Color $w={19} $c="#222" /><Color $w={18} $c="#000" /></ColorStrip>
            <Wrap $mt={6}>Haz clic en cualquier color de arriba<br />para reemplazarlo en la página actual</Wrap>
          </SectionBody>
        </Format>
      </Workspace>

      <Taskbar>
        <Slot $w={42}><Ico s={16} vb="0 0 16 16" fill="#fff"><path d="M0 2.300l7-1v6.200H0zM8 1.200L16 0v7.500H8zM0 8.500h7v6.200l-7-1zM8 8.500h8V16l-8-1.200z" /></Ico></Slot>
        <Slot $w={54}><Ico s={23} w={1.8}><circle cx="14" cy="9.500" r="8" /><path d="M8.500 15.500L2 23" /></Ico></Slot>
        <Slot $w={42}><Ico s={17} vb="0 0 17 17" w={1.3}><path d="M.5 0v3h11V0M.5 5.500h11v6H.5zM.5 17v-3h11v3M15 0v4M15 7v10" /><path d="M13.500 4.500h3v3h-3z" fill="#fff" stroke="none" /></Ico></Slot>
        <Spacer $w={5} />
        <Slot><Disc $s={24} $bg="#f0701f" $r="2px"><Ico s={19} w={3.2}><path strokeLinejoin="round" d="M12 8.500C9 8 10 4 6.500 4S2.500 8 4 9.500 7 11 7 12s-2 1-3 2.500S3 20 6.500 20 9 16 12 15.500C15 16 14 20 17.500 20s4-4 2.500-5.500S17 13 17 12s2-1 3-2.500S21 4 17.500 4 15 8 12 8.500z" /></Ico></Disc></Slot>
        <Slot $open><Ico s={23} fill="#ffd05c"><path d="M1 3h8l2 3h12v15H1z" fill="#e9a91d" /><path d="M1 6h22v15H1z" /><path d="M5 22v-9h14v9h-4v-4H9v4z" fill="#3f95d5" /></Ico></Slot>
        <Slot><Disc $s={24} $bg="#5865f2"><FaDiscord size={15} /></Disc></Slot>
        <Slot $open><Disc $s={23} $bg="#000"><FaSpotify size={24} color="#1ed760" /></Disc></Slot>
        <Slot $open><Ico s={25} w={1.3}><g stroke="#e0204e"><circle cx="12" cy="12" r="11" /><ellipse cx="12" cy="12" rx="6.500" ry="9.500" /><ellipse cx="11" cy="12" rx="4" ry="9" /></g></Ico></Slot>
        <Slot $open><Ico s={24} fill="#1a86cc"><path d="M17 0l7 3v18l-7 3L7 15l-5 4-2-2 5-5-5-5 2-2 5 4zM17 7l-7 5 7 5z" fillRule="evenodd" /><path d="M17 0l7 3v18l-7 3z" fill="#2fa8f0" /></Ico></Slot>
        <Slot $active><Ico s={24} fill="#fff"><circle cx="12" cy="12" r="12" fill="#fbc116" /><path d="M1.600 6A12 12 0 0 0 11 24l6-9-5-1z" fill="#259b4e" /><path d="M1.600 6A12 12 0 0 1 22.400 6H12L7 14z" fill="#df3b2f" /><circle cx="12" cy="12" r="6" /><circle cx="12" cy="12" r="4.800" fill="#4385f5" /></Ico></Slot>
        <Slot $open><DeskStack /></Slot>
        <Slot $open><Zoomer s={24} f={19} /></Slot>
        <Spacer />
        <TraySlot><Ico s={16} vb="0 0 16 16"><foreignObject x="0" y="1" width="15" height="15"><FaDiscord size={14} /></foreignObject><circle cx="13" cy="2.500" r="2.500" fill="#f04a4a" stroke="none" /></Ico></TraySlot>
        <TraySlot><Disc $s={14} $bg="#000"><FaSpotify size={15} color="#1ed760" /></Disc></TraySlot>
        <TraySlot><Disc $s={15} $bg="#1976b9"><Ico s={10} w={2}><path d="M2 9h4l5-4v14l-5-4H2z" fill="#fff" /><path d="M15 8q3 4 0 8M19 5q5 7 0 14" /></Ico></Disc></TraySlot>
        <TraySlot><Ico s={17} fill="#52ba73"><path d="M0 8l14-2v13L0 22z" /><path d="M15 5l4-2v13l-3 2zM20 2l4-1v11l-3 2z" fill="#8fe0a8" /><path d="M4 14l3 3 5-7" fill="none" stroke="#1b4028" strokeWidth="1.500" /></Ico></TraySlot>
        <TraySlot><Zoomer s={15} f={12} /></TraySlot>
        <TraySlot><Ico s={17} fill="#d02b32"><path d="M3 0l6 2 3 9 3-9 6-2v10l-9 9-9-9zM3 12l9 8 9-8v3l-9 9-9-9z" /></Ico></TraySlot>
        <TraySlot><Disc $s={16} $bg="#111" $f={11}>G</Disc></TraySlot>
        <TraySlot><Ico s={16} w={2}><path d="M7 5V2h15v15h-3M2 7h3l1-2h8l1 2h3v14H2z" /><circle cx="10" cy="13.500" r="4" /></Ico></TraySlot>
        <TraySlot><Ico s={17} fill="#fff"><path d="M11 0l10 3v9q0 7-10 12Q1 19 1 12V3z" /><path d="M11 3v17M3 11h17" stroke="#1e2a3c" strokeWidth="2" /><circle cx="18" cy="18" r="6" fill="#159447" /><path d="M15 18l2 2 4-4" stroke="#fff" fill="none" strokeWidth="1.500" /></Ico></TraySlot>
        <TraySlot><Disc $s={15} $bg="#111" $r="2px 2px 6px 6px" $f={5.5}>EPIC</Disc></TraySlot>
        <TraySlot><Disc $s={15} $bg="#14539a"><FaSteam size={15} /></Disc></TraySlot>
        <TraySlot><Disc $s={16} $bg="#d60032" $r="0"><Ico s={13} w={4}><path d="M5 4h11v11M4 8v8h7M21 10v8M21 20v3" /></Ico></Disc></TraySlot>
        <TraySlot><MdCloud size={18} color="#ddd" /></TraySlot>
        <TraySlot><MdMic size={20} /></TraySlot>
        <TraySlot><Ico s={17} w={1.5}><path d="M7 5h16v12H7zM15 17v5M10 22h10M1 3h6v6H1zM4 9v13h4" /></Ico></TraySlot>
        <TraySlot><Ico s={17} w={1.5}><path d="M1 9h4l5-5v16l-5-5H1zM13 9q2 3 0 6M16 6q4 6 0 12M20 4q5 8 0 16" /></Ico></TraySlot>
        <TwoLines $w={34}>ESP<br />LAA</TwoLines>
        <TwoLines $w={73}>19:09<br />16/05/2023</TwoLines>
        <Notice><Ico s={15} vb="0 0 15 15" fill="#fff"><path d="M0 0h15v12H8l-3 3v-3H0z" /><path d="M3 3.500h9M3 6h9M3 8.500h6" stroke="#1e2a3c" /></Ico><Badge>1</Badge></Notice>
        <ShowDesktop />
      </Taskbar>
    </Screen>
  );
}
